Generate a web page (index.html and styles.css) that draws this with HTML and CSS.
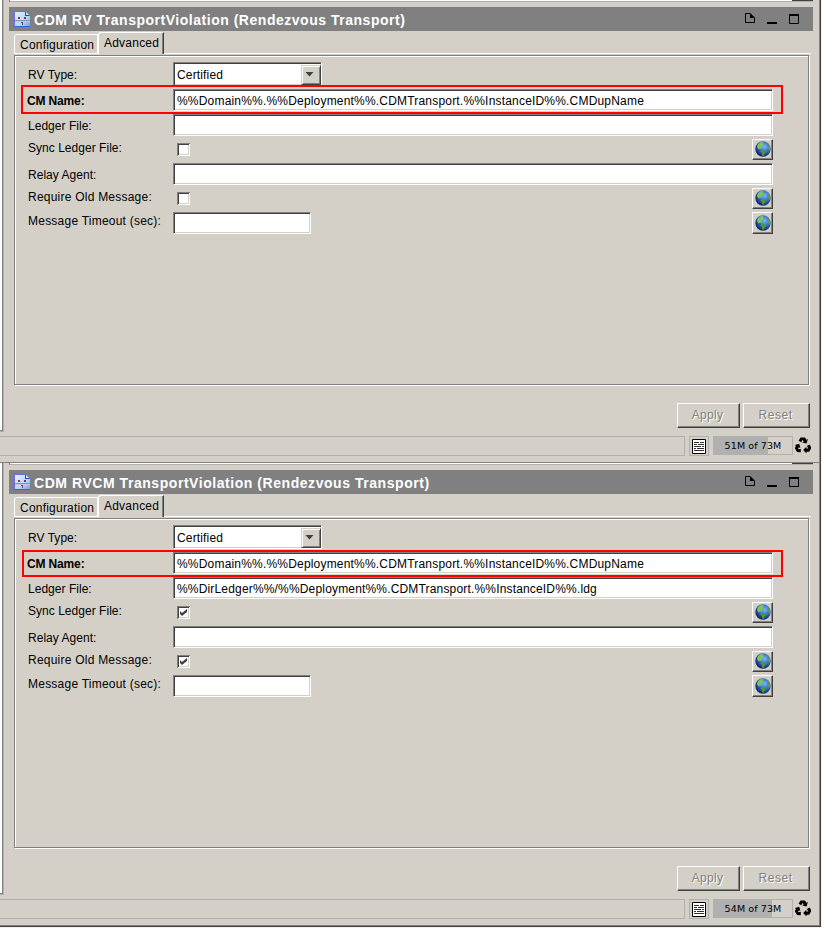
FILE: index.html
```html
<!DOCTYPE html>
<html lang="en">
<head>
<meta charset="utf-8">
<title>Rendezvous Transport</title>
<link rel="stylesheet" href="styles.css">
</head>
<body>
<svg class="defs" width="0" height="0" aria-hidden="true">
  <defs>
    <radialGradient id="sea" cx=".6" cy=".35" r=".65"><stop offset="0" stop-color="#7ab8ee"/><stop offset=".5" stop-color="#3a70cc"/><stop offset="1" stop-color="#0c2368"/></radialGradient>
    <linearGradient id="sheet" x1="0" y1="0" x2="1" y2="1"><stop offset="0" stop-color="#e8f6ff"/><stop offset=".6" stop-color="#b4d8fa"/><stop offset="1" stop-color="#6d9df0"/></linearGradient>
    <symbol id="doc" viewBox="0 0 16 16">
      <path d="M0 0H11L16 5V16H0Z" fill="url(#sheet)"/>
      <path d="M0 0H11V1H1V16H0Z" fill="#6a6af4"/>
      <path d="M11 0L16 5H11Z" fill="#2448d8"/><path d="M12 1L15 4H12Z" fill="#d8e8ff"/>
      <path d="M1 9H16V10H1Z" fill="#8098b0"/><path d="M1 10H16V11H1Z" fill="#b8c8d4"/>
      <path d="M4 6H6V8H4ZM10 6H12V8H10ZM7 11H9V12H7ZM8 12H9V14H8Z" fill="#982860"/>
      <path d="M0 15H16V16H0Z" fill="#3464dc"/>
    </symbol>
    <symbol id="globe" viewBox="0 0 16 16">
      <circle cx="8" cy="8" r="7.7" fill="url(#sea)"/>
      <path d="M3 3L6 1L8.500 1.200L8 3L9 4L7 5.500L6.500 8L5 7.500L3.500 8.500L2 6Z" fill="#7cc464"/>
      <path d="M6 9L9 9.300L11 11L9.500 13L8.500 15L7 14.300L7 12L5.500 10.500Z" fill="#4a9a2c"/>
      <path d="M13 4L15 6L15.500 9L14 10L12.800 7Z" fill="#5c9c4c"/>
    </symbol>
    <symbol id="recycle" viewBox="0 0 16 16">
      <g id="arm"><path d="M3.600 3.700L5.500.500H10L11.400 2.700L12.900 1.900L11.600 6.500L7.200 5.400L8.700 4.500L7.700 2.700L6.300 5.300Z"/></g>
      <use href="#arm" transform="rotate(120 8 8.800)"/><use href="#arm" transform="rotate(240 8 8.800)"/>
    </symbol>
    <symbol id="log" viewBox="0 0 14 15">
      <path d="M.5.5H13.5V14.5H.5Z" fill="#fff" stroke="#000"/>
      <path d="M2 3.5H7M8 3.5H12M2 5.5H5M6 5.5H12M2 7.5H9M10 7.5H12M2 9.5H4M5 9.5H12M2 11.5H12" stroke="#303030"/>
    </symbol>
    <symbol id="controls" viewBox="0 0 56 12">
      <path d="M1.500.500H6L10.500 5V9.500H1.500Z" fill="none" stroke="#000"/><path d="M6 0L11 5H6Z"/>
      <path d="M23 9H33V11H23Z"/>
      <path d="M45.500 2V10.500H54.500V2" fill="none" stroke="#000"/><path d="M45 1H55V3H45Z"/>
    </symbol>
    <symbol id="tick" viewBox="0 0 7 7"><path d="M0 2L2 4L7 0V3L2 7L0 5Z" fill="#404040"/></symbol>
  </defs>
</svg>

<section class="window">
  <div class="sidebar-edge"></div>
  <div class="strip"></div>
  <header class="titlebar"><svg class="doc"><use href="#doc"/></svg><h1 class="title t1">CDM RV TransportViolation (Rendezvous Transport)</h1><svg class="controls"><use href="#controls"/></svg></header>
  <nav class="tabs"><span class="tab">Configuration</span><span class="tab active">Advanced</span><i class="rest"></i></nav>
  <main class="panel">
    <div class="form">
      <label class="tight low">RV Type:</label><div class="select"><span class="value">Certified</span><span class="arrow"></span></div>
      <label class="strong">CM Name:</label><div class="field"><span class="value cm">%%Domain%%.%%Deployment%%.CDMTransport.%%InstanceID%%.CMDupName</span></div>
      <label class="tight">Ledger File:</label><div class="field"></div>
      <label class="high tight">Sync Ledger File:</label><div class="line"><span class="check"></span><span class="globe"><svg><use href="#globe"/></svg></span></div>
      <label class="tight">Relay Agent:</label><div class="field"></div>
      <label class="high">Require Old Message:</label><div class="line"><span class="check"></span><span class="globe"><svg><use href="#globe"/></svg></span></div>
      <label class="high">Message Timeout (sec):</label><div class="line"><div class="field short"></div><span class="globe tall"><svg><use href="#globe"/></svg></span></div>
    </div>
  </main>
  <div class="actions"><span class="button apply">Apply</span><span class="button reset">Reset</span></div>
  <footer class="status"><div class="message"></div><div class="log"><svg><use href="#log"/></svg></div><div class="memory m1"><span>51M of 73M</span></div><svg class="recycle"><use href="#recycle"/></svg></footer>
  <div class="highlight h1"></div>
</section>

<section class="window last">
  <div class="sidebar-edge"></div>
  <div class="strip"></div>
  <header class="titlebar"><svg class="doc"><use href="#doc"/></svg><h1 class="title t2">CDM RVCM TransportViolation (Rendezvous Transport)</h1><svg class="controls"><use href="#controls"/></svg></header>
  <nav class="tabs"><span class="tab">Configuration</span><span class="tab active">Advanced</span><i class="rest"></i></nav>
  <main class="panel">
    <div class="form">
      <label class="tight low">RV Type:</label><div class="select"><span class="value">Certified</span><span class="arrow"></span></div>
      <label class="strong">CM Name:</label><div class="field"><span class="value cm">%%Domain%%.%%Deployment%%.CDMTransport.%%InstanceID%%.CMDupName</span></div>
      <label class="tight">Ledger File:</label><div class="field"><span class="value ldg">%%DirLedger%%/%%Deployment%%.CDMTransport.%%InstanceID%%.ldg</span></div>
      <label class="high tight">Sync Ledger File:</label><div class="line"><span class="check"><svg><use href="#tick"/></svg></span><span class="globe"><svg><use href="#globe"/></svg></span></div>
      <label class="tight">Relay Agent:</label><div class="field"></div>
      <label class="high">Require Old Message:</label><div class="line"><span class="check"><svg><use href="#tick"/></svg></span><span class="globe"><svg><use href="#globe"/></svg></span></div>
      <label class="high">Message Timeout (sec):</label><div class="line"><div class="field short"></div><span class="globe tall"><svg><use href="#globe"/></svg></span></div>
    </div>
  </main>
  <div class="actions"><span class="button apply">Apply</span><span class="button reset">Reset</span></div>
  <footer class="status"><div class="message"></div><div class="log"><svg><use href="#log"/></svg></div><div class="memory m2"><span>54M of 73M</span></div><svg class="recycle"><use href="#recycle"/></svg></footer>
  <div class="highlight h2"></div>
</section>
</body>
</html>
```
FILE: styles.css
```css
* { box-sizing: border-box; }
body { margin: 0; width: 822px; height: 928px; overflow: hidden; background: #f4f2ee; font: 12px/24px "Liberation Sans", Arial, sans-serif; color: #000; }
.defs { position: absolute; }
svg { display: block; flex: none; }
.window { position: relative; width: 821px; height: 463px; background: #d4d0c8; border-right: 1px solid #404040; border-bottom: 1px solid #808080; box-shadow: inset -1px 0 #808080; display: flex; flex-direction: column; }
.window.last { height: 464px; border-bottom-color: #404040; box-shadow: inset -1px -1px #808080; }
.sidebar-edge { position: absolute; left: 0; top: 0; width: 4px; height: 432px; border: solid #b0b0b0; border-width: 0 1px 1px 0; background: #fff; }
.sidebar-edge::before { content: ""; position: absolute; left: 0; top: 0; width: 2px; height: 430px; border: solid #808080; border-width: 0 1px 1px 0; }
.strip { flex: none; width: 804px; height: 2px; margin-left: 9px; border-left: 1px solid #808080; background: linear-gradient(90deg, transparent 782px, #404040 782px) 0 0 / 100% 1px no-repeat, linear-gradient(#fff 1px, #b0b0b0 1px); }
.titlebar { flex: none; display: flex; align-items: center; width: 804px; height: 24px; margin: 5px 0 0 9px; padding: 0 13px 0 5px; background: #808080; }
.doc { width: 16px; height: 16px; }
.title { margin: 2px 0 0 4px; flex: 1; font-size: 14px; line-height: 22px; font-weight: bold; color: #fff; white-space: nowrap; }
.t1 { letter-spacing: .52px; }
.t2 { letter-spacing: .55px; }
.controls { width: 56px; height: 12px; }
.tabs { flex: none; display: flex; align-items: flex-end; height: 22px; margin: 1px 9px 0 12px; }
.tab { height: 20px; width: 84px; margin-left: 2px; padding-left: 5px; line-height: 20px; border: 1px solid #fff; border-radius: 3px 0 0 0; letter-spacing: .22px; }
.tab.active { height: 22px; width: 66px; margin: 0; border-color: #fff #404040 transparent #fff; border-width: 1px 1px 0 1px; box-shadow: inset -1px 0 #808080; }
.rest { flex: 1; height: 1px; background: #fff; }
.panel { flex: none; width: 795px; height: 330px; margin: 1px 0 0 14px; padding: 6px 0 0 13px; border: 1px solid #808080; box-shadow: inset 1px 1px #fff, 1px 1px #fff; }
.form { display: grid; grid-template-columns: 145px 600px; grid-template-rows: 27px 25px 25px 24px 25px 24px 22px; align-items: start; }
label { line-height: 25px; letter-spacing: .23px; white-space: nowrap; }
label.high { line-height: 18px; }
label.tight { letter-spacing: .03px; }
label.low { line-height: 26px; }
label.strong { font-weight: bold; letter-spacing: -.15px; margin-left: -1px; }
.field, .select { height: 22px; border: 1px solid; border-color: #808080 #fff #fff #808080; box-shadow: inset 1px 1px #404040, inset -1px -1px #d4d0c8; background: #fff; padding-left: 3px; line-height: 22px; white-space: nowrap; }
.select { width: 149px; height: 24px; display: flex; padding: 2px 0 0 3px; line-height: 20px; }
.select .value { flex: 1; letter-spacing: .15px; }
.cm { letter-spacing: .39px; letter-spacing: .19px; }
.ldg { letter-spacing: .17px; }
.arrow { width: 20px; height: 20px; background: #d4d0c8; border: 1px solid; border-color: #d4d0c8 #404040 #404040 #d4d0c8; box-shadow: inset 1px 1px #fff, inset -1px -1px #808080; display: grid; place-items: center; }
.arrow::before { content: ""; width: 9px; height: 5px; margin: 0 3px 2px 0; background: #404040; clip-path: polygon(0 0, 100% 0, 50% 100%); }
.short { width: 138px; }
.line { display: flex; justify-content: space-between; }
.check { width: 13px; height: 13px; margin: 4px 0 0 4px; padding: 3px; background: #fff; box-shadow: inset 1px 1px #808080, inset -1px -1px #fff, inset 2px 2px #404040, inset -2px -2px #d4d0c8; }
.check svg { width: 7px; height: 7px; }
.globe { width: 21px; height: 21px; border: 1px solid; border-color: #fff #404040 #404040 #fff; box-shadow: inset -1px -1px #808080; padding: 1px 0 0 2px; }
.globe.tall { height: 22px; padding-top: 2px; }
.globe svg { width: 16px; height: 16px; }
.actions { flex: none; display: flex; gap: 3px; justify-content: flex-end; margin: 18px 10px 0 0; }
.button { height: 25px; width: 63px; text-align: center; line-height: 23px; color: #808080; text-shadow: 1px 1px #fff; border: 1px solid; border-color: #fff #404040 #404040 #fff; box-shadow: inset -1px -1px #808080; letter-spacing: .3px; padding-right: 2px; }
.reset { width: 67px; letter-spacing: .55px; }
.status { flex: none; display: flex; height: 20px; margin-top: 8px; }
.message { width: 685px; border: solid #b0b0b0; border-width: 1px 1px 1px 0; }
.log { width: 20px; margin-left: 4px; border: 1px solid #b0b0b0; padding: 2px 0 0 2px; }
.log svg { width: 14px; height: 15px; }
.memory { width: 80px; height: 19px; margin-left: 4px; border: 1px solid #b0b0b0; text-align: center; font: 9.5px/18px "DejaVu Sans", sans-serif; letter-spacing: .1px; white-space: nowrap; }
.m1 { background: linear-gradient(90deg, #b0b0b0 54px, transparent 54px); }
.m2 { background: linear-gradient(90deg, #b0b0b0 58px, transparent 58px); }
.recycle { width: 16px; height: 16px; margin: 1px 0 0 2px; }
.highlight { position: absolute; border: 2px solid #f00; }
.h1 { left: 21px; top: 85px; width: 762px; height: 29px; }
.h2 { left: 22px; top: 87px; width: 761px; height: 27px; }
```
